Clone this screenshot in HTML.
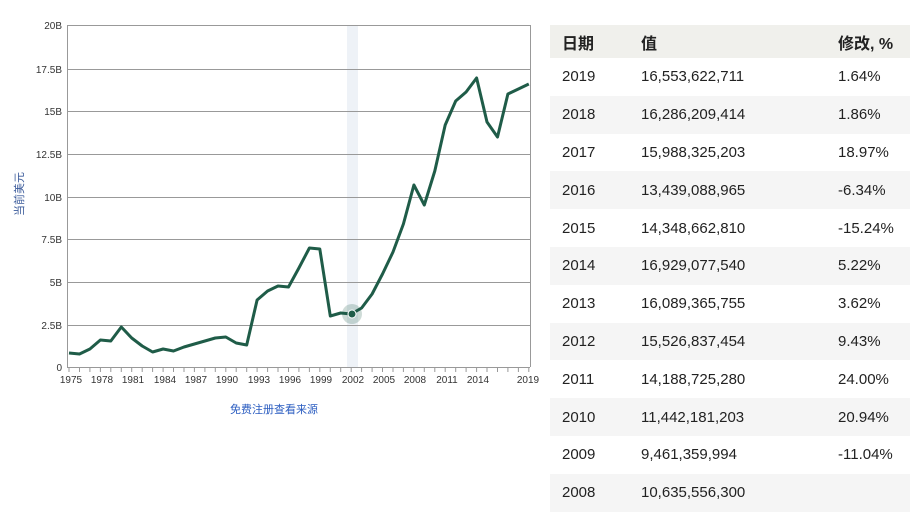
<!DOCTYPE html>
<html><head><meta charset="utf-8"><style>
body{margin:0;width:917px;height:519px;background:#fff;overflow:hidden;font-family:"Liberation Sans","Noto Sans CJK SC",sans-serif;}
svg{position:absolute;left:0;top:0}
table{position:absolute;left:550px;top:25px;width:360px;border-collapse:collapse;font-size:15px;color:#222}
td,th{padding:0 0 0 12px;height:37.8px;text-align:left;font-weight:normal}
th{height:33px;background:#f0f0ec;font-weight:bold;font-size:16px}
tr:nth-child(odd) td{background:#f5f5f5}
td:nth-child(2),th:nth-child(2){padding-left:0}
td:nth-child(3),th:nth-child(3){padding-left:0}
</style></head><body>
<svg width="545" height="519" font-family="Liberation Sans, Noto Sans CJK SC, sans-serif">
<rect x="347" y="25" width="11" height="342" fill="#eef2f7"/>
<g stroke="#999" stroke-width="1">
<line x1="67" y1="25.5" x2="530" y2="25.5"/>
<line x1="67" y1="69.5" x2="530" y2="69.5"/>
<line x1="67" y1="111.5" x2="530" y2="111.5"/>
<line x1="67" y1="154.5" x2="530" y2="154.5"/>
<line x1="67" y1="197.5" x2="530" y2="197.5"/>
<line x1="67" y1="239.5" x2="530" y2="239.5"/>
<line x1="67" y1="282.5" x2="530" y2="282.5"/>
<line x1="67" y1="325.5" x2="530" y2="325.5"/>
<line x1="67" y1="367.5" x2="530" y2="367.5"/>
<line x1="67.5" y1="25" x2="67.5" y2="367"/>
<line x1="530.5" y1="25" x2="530.5" y2="367"/>
</g>
<g stroke="#999">
<path d="M69 367v5M79.5 367v5M89.9 367v5M100.4 367v5M110.8 367v5M121.3 367v5M131.7 367v5M142.2 367v5M152.6 367v5M163.1 367v5M173.5 367v5M184 367v5M194.4 367v5M204.9 367v5M215.3 367v5M225.8 367v5M236.2 367v5M246.7 367v5M257.1 367v5M267.6 367v5M278 367v5M288.5 367v5M298.9 367v5M309.4 367v5M319.8 367v5M330.3 367v5M340.7 367v5M351.2 367v5M361.6 367v5M372.1 367v5M382.5 367v5M393 367v5M403.4 367v5M413.9 367v5M424.3 367v5M434.8 367v5M445.2 367v5M455.7 367v5M466.1 367v5M476.6 367v5M487 367v5M497.5 367v5M507.9 367v5M518.4 367v5M528.8 367v5"/>
</g>
<g font-size="10" fill="#333" text-anchor="end">
<text x="62" y="29">20B</text><text x="62" y="73">17.5B</text><text x="62" y="115">15B</text><text x="62" y="158">12.5B</text><text x="62" y="201">10B</text><text x="62" y="243">7.5B</text><text x="62" y="286">5B</text><text x="62" y="329">2.5B</text><text x="62" y="371">0</text>
</g>
<g font-size="10" fill="#333" text-anchor="middle">
<text x="71" y="383">1975</text><text x="102" y="383">1978</text><text x="133" y="383">1981</text><text x="165" y="383">1984</text><text x="196" y="383">1987</text><text x="227" y="383">1990</text><text x="259" y="383">1993</text><text x="290" y="383">1996</text><text x="321" y="383">1999</text><text x="353" y="383">2002</text><text x="384" y="383">2005</text><text x="415" y="383">2008</text><text x="447" y="383">2011</text><text x="478" y="383">2014</text><text x="528" y="383">2019</text>
</g>
<text transform="translate(23,194) rotate(-90)" font-size="11" fill="#3a5a9a" text-anchor="middle">当前美元</text>
<text x="274" y="413" font-size="11" fill="#2a5cc0" text-anchor="middle">免费注册查看来源</text>
<polyline fill="none" stroke="#1f5c48" stroke-width="3" stroke-linejoin="round" points="69,353 79.5,354 89.9,349 100.4,340 110.8,341 121.3,327 131.7,338 142.2,346 152.6,352 163.1,349 173.5,351 184,347 194.4,344 204.9,341 215.3,338 225.8,337 236.2,343 246.7,345 257.1,300 267.6,291 278,286 288.5,287 298.9,268 309.4,248 319.8,249 330.3,316 340.7,313 351.2,314 361.6,308 372.1,294 382.5,274 393,252 403.4,224 413.9,185 424.3,205 434.8,171 445.2,125 455.7,101 466.1,92 476.6,78 487,122 497.5,137 507.9,94 518.4,89 528.8,84"/>
<circle cx="352" cy="314" r="10" fill="#1f5c48" opacity="0.22"/>
<circle cx="352" cy="314" r="4" fill="#1f5c48" stroke="#fff" stroke-width="1"/>
</svg>
<table>
<tr><th>日期</th><th>值</th><th>修改, %</th></tr>
<tr><td style="width:79px">2019</td><td style="width:197px">16,553,622,711</td><td>1.64%</td></tr>
<tr><td>2018</td><td>16,286,209,414</td><td>1.86%</td></tr>
<tr><td>2017</td><td>15,988,325,203</td><td>18.97%</td></tr>
<tr><td>2016</td><td>13,439,088,965</td><td>-6.34%</td></tr>
<tr><td>2015</td><td>14,348,662,810</td><td>-15.24%</td></tr>
<tr><td>2014</td><td>16,929,077,540</td><td>5.22%</td></tr>
<tr><td>2013</td><td>16,089,365,755</td><td>3.62%</td></tr>
<tr><td>2012</td><td>15,526,837,454</td><td>9.43%</td></tr>
<tr><td>2011</td><td>14,188,725,280</td><td>24.00%</td></tr>
<tr><td>2010</td><td>11,442,181,203</td><td>20.94%</td></tr>
<tr><td>2009</td><td>9,461,359,994</td><td>-11.04%</td></tr>
<tr><td>2008</td><td>10,635,556,300</td><td></td></tr>
</table>
</body></html>
